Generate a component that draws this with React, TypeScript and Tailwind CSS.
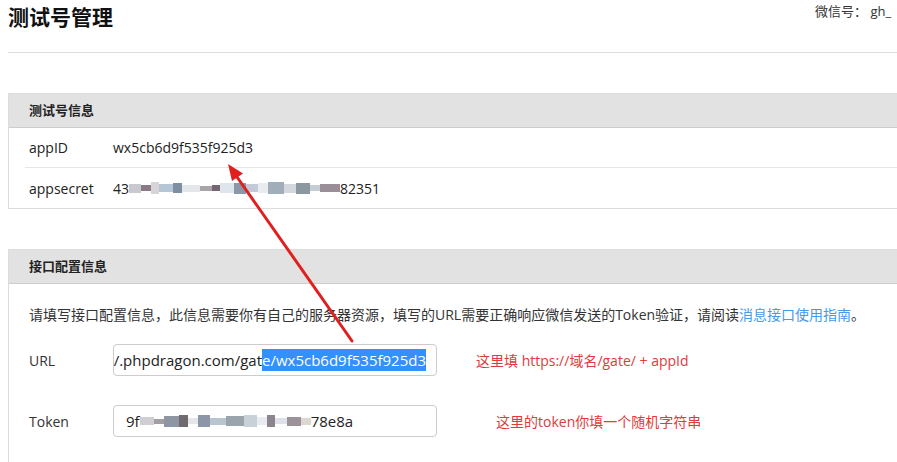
const secretBlocks = [
  ["bg-[#c9c9cf]", "w-[12px]", "h-[9px]"],
  ["bg-[#8a7a86]", "w-[10px]", "h-[6px]"],
  ["bg-[#d7d3d6]", "w-[8px]", "h-[12px]"],
  ["bg-[#b7c6d6]", "w-[14px]", "h-[8px]"],
  ["bg-[#7f8fa3]", "w-[9px]", "h-[10px]"],
  ["bg-[#e3e6ea]", "w-[18px]", "h-[7px]"],
  ["bg-[#a9a4aa]", "w-[12px]", "h-[5px]"],
  ["bg-[#766672]", "w-[8px]", "h-[6px]"],
  ["bg-[#dfe5ec]", "w-[14px]", "h-[10px]"],
  ["bg-[#8c98a8]", "w-[12px]", "h-[11px]"],
  ["bg-[#c1cad6]", "w-[12px]", "h-[8px]"],
  ["bg-[#e9ecef]", "w-[10px]", "h-[10px]"],
  ["bg-[#a0aeba]", "w-[16px]", "h-[12px]"],
  ["bg-[#d4d8de]", "w-[12px]", "h-[9px]"],
  ["bg-[#8d97a0]", "w-[14px]", "h-[11px]"],
  ["bg-[#c6ccd3]", "w-[10px]", "h-[6px]"],
  ["bg-[#9a8f99]", "w-[20px]", "h-[8px]"],
];

const tokenBlocks = [
  ["bg-[#d0cdd3]", "w-[14px]", "h-[8px]"],
  ["bg-[#a59da6]", "w-[10px]", "h-[5px]"],
  ["bg-[#8f96a3]", "w-[15px]", "h-[11px]"],
  ["bg-[#6f6a70]", "w-[9px]", "h-[12px]"],
  ["bg-[#e4e6ea]", "w-[10px]", "h-[6px]"],
  ["bg-[#8d96a6]", "w-[12px]", "h-[12px]"],
  ["bg-[#b8c4cf]", "w-[16px]", "h-[7px]"],
  ["bg-[#9aa4ad]", "w-[18px]", "h-[10px]"],
  ["bg-[#c8d0d8]", "w-[13px]", "h-[12px]"],
  ["bg-[#e8ebef]", "w-[10px]", "h-[8px]"],
  ["bg-[#8c8590]", "w-[8px]", "h-[12px]"],
  ["bg-[#dee2e8]", "w-[12px]", "h-[6px]"],
  ["bg-[#9c929a]", "w-[14px]", "h-[9px]"],
  ["bg-[#dcd8cf]", "w-[10px]", "h-[7px]"],
];

const Blur = ({ blocks }: { blocks: string[][] }) => (
  <span className="inline-flex items-center">
    {blocks.map((b, i) => (
      <span key={i} className={`${b[0]} ${b[1]} ${b[2]} inline-block`} />
    ))}
  </span>
);

const PanelHead = ({ title }: { title: string }) => (
  <div className="h-[34px] bg-[#e2e2e2] border-b border-[#cdcdcd] px-5 flex items-center text-[13px] font-bold text-[#222]">
    {title}
  </div>
);

export default function App() {
  return (
    <div
      className="relative w-[897px] h-[462px] overflow-hidden bg-white text-[#222]"
      style={{ fontFamily: "'Open Sans','Noto Sans CJK SC',sans-serif" }}
    >
      <div className="w-[960px] h-[53px] mx-2 border-b border-[#dedede] flex items-start">
        <h1 className="w-[807px] text-[21px] font-bold leading-[34px] text-[#111]">测试号管理</h1>
        <div className="text-[13px] leading-[20px] pt-[1px] text-[#333] whitespace-nowrap">微信号： gh_</div>
      </div>

      <div className="ml-2 mt-[40px] w-[920px] border border-[#dcdcdc]">
        <PanelHead title="测试号信息" />
        <div className="ml-4">
          <div className="h-[40px] flex items-center border-b border-[#e6e6e6] pl-1 text-[14px]">
            <span className="w-[84px]">appID</span>
            <span>wx5cb6d9f535f925d3</span>
          </div>
          <div className="h-[40px] flex items-center pl-1 text-[14px]">
            <span className="w-[84px]">appsecret</span>
            <span className="flex items-center">
              43
              <Blur blocks={secretBlocks} />
              82351
            </span>
          </div>
        </div>
      </div>

      <div className="ml-2 mt-[40px] w-[920px] h-[300px] border border-[#dcdcdc]">
        <PanelHead title="接口配置信息" />
        <div className="pl-5 pt-[21px]">
          <p className="text-[14px] leading-[20px] text-[#333] whitespace-nowrap">
            请填写接口配置信息，此信息需要你有自己的服务器资源，填写的URL需要正确响应微信发送的Token验证，请阅读
            <span className="text-[#459ae9]">消息接口使用指南</span>。
          </p>
          <div className="mt-[19px] flex items-center">
            <span className="w-[84px] text-[14px] text-[#333]">URL</span>
            <div className="w-[324px] h-[32px] border border-[#cccccc] rounded-sm flex items-center justify-end pr-[10px] text-[15px] whitespace-nowrap">
              <span>/.phpdragon.com/gat</span>
              <span className="bg-[#3390ff] text-white">e/wx5cb6d9f535f925d3</span>
            </div>
            <span className="ml-[39px] text-[14px] text-[#e03a3a]">这里填 https://域名/gate/ + appId</span>
          </div>
          <div className="mt-[29px] flex items-center">
            <span className="w-[84px] text-[14px] text-[#333]">Token</span>
            <div className="w-[324px] h-[32px] border border-[#cccccc] rounded-sm flex items-center px-3 text-[15px] whitespace-nowrap">
              9f
              <Blur blocks={tokenBlocks} />
              78e8a
            </div>
            <span className="ml-[59px] text-[14px] text-[#e03a3a]">这里的token你填一个随机字符串</span>
          </div>
        </div>
      </div>

      <svg className="absolute left-0 top-0 pointer-events-none" width="897" height="462">
        <line x1="352" y1="341" x2="237" y2="177" stroke="#e0201f" strokeWidth="3" strokeLinecap="round" />
        <polygon points="228,164 243,173.5 232,181" fill="#e0201f" />
      </svg>
    </div>
  );
}
